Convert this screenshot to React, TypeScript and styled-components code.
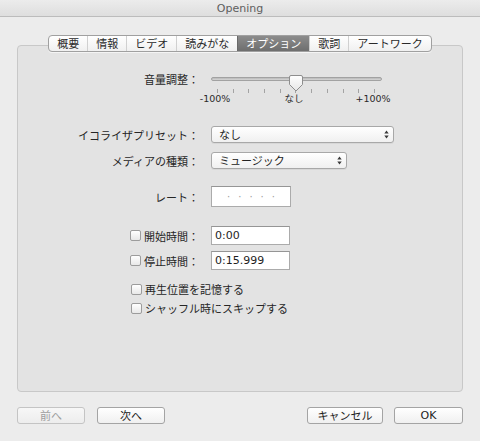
import styled, { createGlobalStyle } from "styled-components";

const jp = `"Noto Sans CJK JP", sans-serif`;
const latin = `"DejaVu Sans", "Noto Sans CJK JP", sans-serif`;

const GlobalStyle = createGlobalStyle`
  html, body {
    margin: 0;
    padding: 0;
    background: #ececec;
  }
`;

const Window = styled.div`
  width: 480px;
  height: 441px;
  background: #ececec;
  display: flex;
  flex-direction: column;
  overflow: hidden;
`;

const TitleBar = styled.div`
  height: 17px;
  padding-top: 1px;
  box-sizing: border-box;
  border-bottom: 1px solid #bcbcbc;
  background: linear-gradient(#ececec, #dedede);
  display: flex;
  align-items: center;
  justify-content: center;
  font-family: ${latin};
  font-size: 11px;
  color: #5e5e5e;
`;

const Body = styled.div`
  flex: 1;
  padding: 0 17px;
  display: flex;
  flex-direction: column;
`;

const GroupBox = styled.div`
  margin-top: 28px;
  height: 347px;
  box-sizing: border-box;
  border: 1px solid #c8c8c8;
  border-radius: 4px;
  background: #e3e3e3;
  display: flex;
  flex-direction: column;
`;

const TabWrap = styled.div`
  display: flex;
  justify-content: center;
  margin-top: -11px;
`;

const TabBar = styled.div`
  display: flex;
  height: 17px;
  box-sizing: border-box;
  border: 1px solid #a0a0a0;
  border-radius: 4px;
  overflow: hidden;
  background: linear-gradient(#ffffff, #f0f0f0);
  box-shadow: 0 1px 0 rgba(255, 255, 255, 0.6);
`;

const Tab = styled.div<{ $active?: boolean }>`
  padding: 0 8px;
  font-family: ${jp};
  font-size: 11px;
  line-height: 15px;
  color: ${(p) => (p.$active ? "#ffffff" : "#2a2a2a")};
  background: ${(p) =>
    p.$active ? "linear-gradient(#8c8c8c, #6e6e6e)" : "transparent"};
  border-left: 1px solid ${(p) => (p.$active ? "#6a6a6a" : "#d0d0d0")};
  &:first-child {
    border-left: none;
  }
`;

const Row = styled.div<{ $gap: number; $top?: boolean; $indent?: number }>`
  display: flex;
  align-items: ${(p) => (p.$top ? "flex-start" : "center")};
  margin-top: ${(p) => p.$gap}px;
  padding-left: ${(p) => p.$indent ?? 0}px;
`;

const Label = styled.div`
  width: 181px;
  flex-shrink: 0;
  margin-right: 12px;
  display: flex;
  justify-content: flex-end;
  align-items: center;
  gap: 3px;
  font-family: ${jp};
  font-size: 11px;
  line-height: 16px;
  color: #262626;
  white-space: nowrap;
`;

const SliderBox = styled.div`
  position: relative;
  width: 171px;
  height: 34px;
  display: flex;
  flex-direction: column;
`;

const Track = styled.div`
  margin-top: 6px;
  height: 4px;
  box-sizing: border-box;
  border-radius: 2px;
  border: 1px solid #a2a2a2;
  background: linear-gradient(#b9b9b9, #d6d6d6);
`;

const Ticks = styled.div`
  display: flex;
  justify-content: space-between;
  padding: 0 7px 0 6px;
  margin-top: 8px;
  height: 4px;
`;

const Tick = styled.span`
  width: 1px;
  background: #a3a3a3;
`;

const Knob = styled.svg`
  position: absolute;
  left: 78px;
  top: 4px;
`;

const TickLabel = styled.span`
  position: absolute;
  top: 22px;
  transform: translateX(-50%);
  font-family: ${latin};
  font-size: 9.5px;
  line-height: 12px;
  color: #2a2a2a;
  white-space: nowrap;
`;

const Popup = styled.div<{ $width: number }>`
  width: ${(p) => p.$width}px;
  height: 17px;
  box-sizing: border-box;
  border: 1px solid #a8a8a8;
  border-radius: 3px;
  background: linear-gradient(#ffffff, #f0f0f0);
  box-shadow: 0 1px 0 rgba(0, 0, 0, 0.05);
  display: flex;
  align-items: center;
  justify-content: space-between;
  padding: 0 4px 0 7px;
  font-family: ${jp};
  font-size: 11px;
  line-height: 15px;
  color: #222;
`;

const Field = styled.div<{ $width: number; $height: number; $center?: boolean }>`
  width: ${(p) => p.$width}px;
  height: ${(p) => p.$height}px;
  box-sizing: border-box;
  border: 1px solid #ababab;
  border-top-color: #959595;
  background: #ffffff;
  display: flex;
  align-items: center;
  justify-content: ${(p) => (p.$center ? "center" : "flex-start")};
  gap: 8px;
  padding: 0 3px;
  font-family: ${latin};
  font-size: 11px;
  color: #1e1e1e;
`;

const Dot = styled.span`
  color: #9c9c9c;
  font-size: 10px;
`;

const Checkbox = styled.span`
  width: 11px;
  height: 11px;
  box-sizing: border-box;
  flex-shrink: 0;
  border: 1px solid #9c9c9c;
  border-radius: 2px;
  background: linear-gradient(#ffffff, #e8e8e8);
`;

const CheckText = styled.span`
  margin-left: 3px;
  font-family: ${jp};
  font-size: 11px;
  line-height: 16px;
  color: #262626;
`;

const Footer = styled.div`
  margin-top: 15px;
  display: flex;
  justify-content: space-between;
`;

const ButtonGroup = styled.div<{ $gap: number }>`
  display: flex;
  gap: ${(p) => p.$gap}px;
`;

const Button = styled.div<{ $width: number; $disabled?: boolean; $latin?: boolean }>`
  width: ${(p) => p.$width}px;
  height: 17px;
  box-sizing: border-box;
  border: 1px solid ${(p) => (p.$disabled ? "#c4c4c4" : "#a4a4a4")};
  border-radius: 3px;
  background: ${(p) =>
    p.$disabled ? "linear-gradient(#f7f7f7, #ededed)" : "linear-gradient(#ffffff, #f0f0f0)"};
  display: flex;
  align-items: center;
  justify-content: center;
  font-family: ${(p) => (p.$latin ? latin : jp)};
  font-size: 11px;
  line-height: 15px;
  color: ${(p) => (p.$disabled ? "#9e9e9e" : "#222")};
`;

const Arrows = () => (
  <svg width="5" height="9" viewBox="0 0 5 9">
    <path d="M0.3 3.6 L2.5 0.6 L4.7 3.6 Z M0.3 5.4 L2.5 8.4 L4.7 5.4 Z" fill="#3a3a3a" />
  </svg>
);

const tabs = ["概要", "情報", "ビデオ", "読みがな", "オプション", "歌詞", "アートワーク"];
const tickStart = 6;
const tickEnd = 164;

export default function App() {
  const tickX = (i: number) => tickStart + ((tickEnd - tickStart) / 10) * i;
  return (
    <>
      <GlobalStyle />
      <Window>
        <TitleBar>Opening</TitleBar>
        <Body>
          <GroupBox>
            <TabWrap>
              <TabBar>
                {tabs.map((t) => (
                  <Tab key={t} $active={t === "オプション"}>
                    {t}
                  </Tab>
                ))}
              </TabBar>
            </TabWrap>

            <Row $gap={19} $top>
              <Label>音量調整：</Label>
              <SliderBox>
                <Track />
                <Ticks>
                  {Array.from({ length: 11 }).map((_, i) => (
                    <Tick key={i} />
                  ))}
                </Ticks>
                <Knob width="14" height="17" viewBox="0 0 14 17">
                  <defs>
                    <linearGradient id="kg" x1="0" y1="0" x2="0" y2="1">
                      <stop offset="0" stopColor="#ffffff" />
                      <stop offset="1" stopColor="#e6e6e6" />
                    </linearGradient>
                  </defs>
                  <path
                    d="M2 0.5 H12 Q13.5 0.5 13.5 2 V9.5 L7 16 L0.5 9.5 V2 Q0.5 0.5 2 0.5 Z"
                    fill="url(#kg)"
                    stroke="#8e8e8e"
                  />
                </Knob>
                <TickLabel style={{ left: tickX(0) - 2 }}>-100%</TickLabel>
                <TickLabel style={{ left: tickX(5) - 2 }}>なし</TickLabel>
                <TickLabel style={{ left: tickX(10) - 2 }}>+100%</TickLabel>
              </SliderBox>
            </Row>

            <Row $gap={21}>
              <Label>イコライザプリセット：</Label>
              <Popup $width={183}>
                なし
                <Arrows />
              </Popup>
            </Row>

            <Row $gap={9}>
              <Label>メディアの種類：</Label>
              <Popup $width={136}>
                ミュージック
                <Arrows />
              </Popup>
            </Row>

            <Row $gap={17}>
              <Label>レート：</Label>
              <Field $width={80} $height={21} $center>
                {Array.from({ length: 5 }).map((_, i) => (
                  <Dot key={i}>·</Dot>
                ))}
              </Field>
            </Row>

            <Row $gap={19}>
              <Label>
                <Checkbox />
                開始時間：
              </Label>
              <Field $width={79} $height={19}>
                0:00
              </Field>
            </Row>

            <Row $gap={6}>
              <Label>
                <Checkbox />
                停止時間：
              </Label>
              <Field $width={79} $height={19}>
                0:15.999
              </Field>
            </Row>

            <Row $gap={11} $indent={113}>
              <Checkbox />
              <CheckText>再生位置を記憶する</CheckText>
            </Row>

            <Row $gap={3} $indent={113}>
              <Checkbox />
              <CheckText>シャッフル時にスキップする</CheckText>
            </Row>
          </GroupBox>

          <Footer>
            <ButtonGroup $gap={12}>
              <Button $width={68} $disabled>
                前へ
              </Button>
              <Button $width={68}>次へ</Button>
            </ButtonGroup>
            <ButtonGroup $gap={11}>
              <Button $width={76}>キャンセル</Button>
              <Button $width={69} $latin>
                OK
              </Button>
            </ButtonGroup>
          </Footer>
        </Body>
      </Window>
    </>
  );
}
